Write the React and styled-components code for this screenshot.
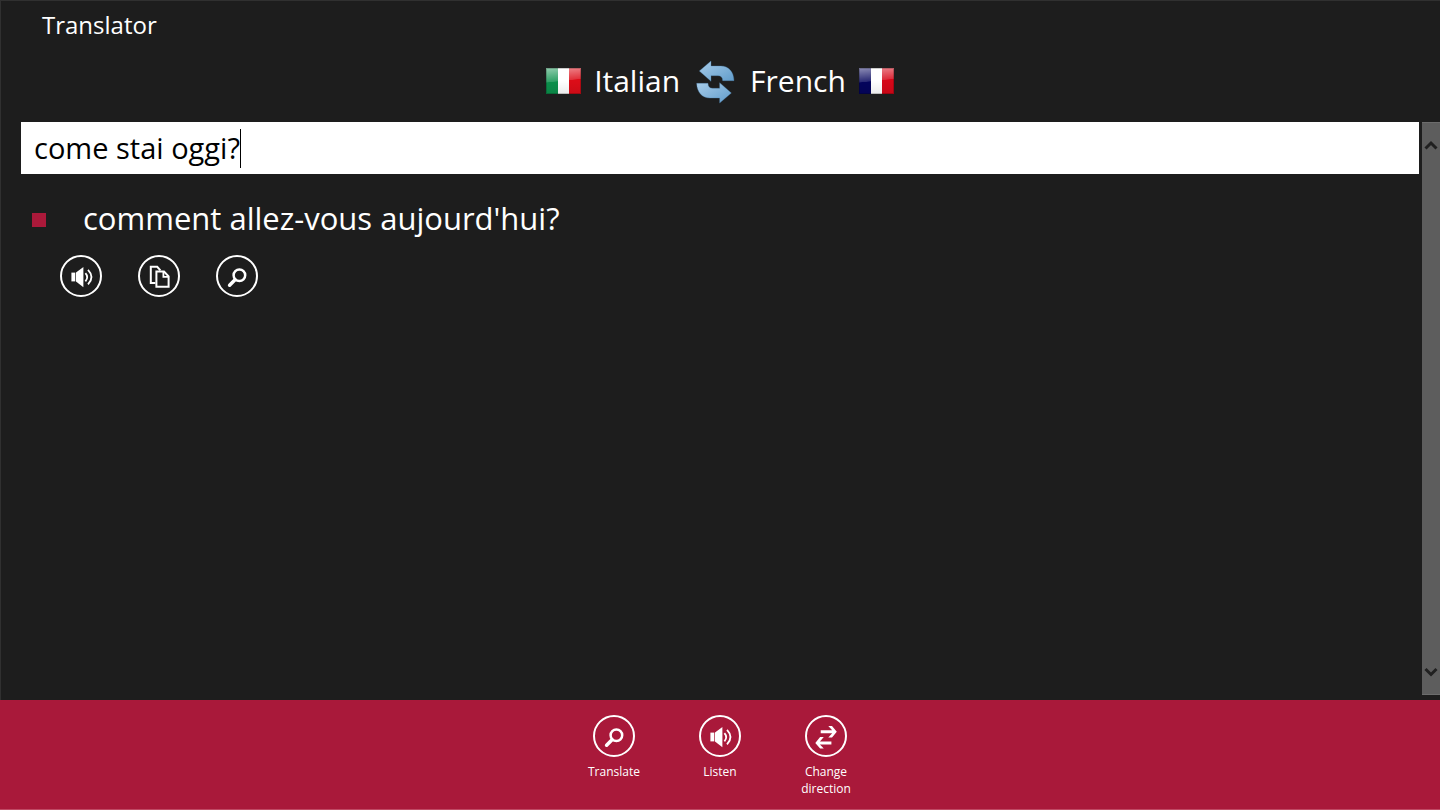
import React, { useState } from "react";
import styled, { createGlobalStyle } from "styled-components";

const GlobalStyle = createGlobalStyle`
  *, *::before, *::after { box-sizing: border-box; }
  body {
    margin: 0;
    background: #1d1d1d;
    color: #fff;
    font-family: "Open Sans", "Noto Sans", sans-serif;
  }
  button { font: inherit; color: inherit; background: none; border: 0; padding: 0; cursor: pointer; }
`;

const Page = styled.div`
  min-height: 100vh;
  display: flex;
  flex-direction: column;
  box-shadow: inset 1px 1px #303030;
`;

const Title = styled.h1`
  margin: 0;
  padding: 7px 42px 0;
  font-size: 24px;
  line-height: 36px;
  font-weight: 400;
`;

const Languages = styled.div`
  display: flex;
  justify-content: center;
  align-items: center;
  height: 52px;
  margin: 12px 0 15px;
`;

const Language = styled.button`
  display: flex;
  align-items: center;
  gap: 13px;
  font-size: 30px;
  line-height: 44px;
`;

const SwapButton = styled.button`
  width: 50px;
  height: 52px;
  margin: 0 10px;
  svg { display: block; }
`;

const Flag = styled.span`
  width: 35px;
  height: 26px;
  box-shadow: inset 0 0 0 1px rgba(0, 0, 0, 0.2);
  background:
    linear-gradient(174deg, rgba(255, 255, 255, 0.55), rgba(255, 255, 255, 0.15) 48%, transparent 50%),
    linear-gradient(transparent 50%, rgba(0, 0, 0, 0.08)),
    linear-gradient(90deg, ${(p) => p.$first} 33%, #fff 33% 67%, ${(p) => p.$last} 67%);
`;

const Body = styled.main`
  flex: 1;
  display: flex;
  gap: 3px;
  margin-bottom: 5px;
`;

const Content = styled.div`
  flex: 1;
  padding-left: 21px;
`;

const Field = styled.label`
  display: flex;
  align-items: center;
  height: 52px;
  padding-left: 13px;
  background: #fff;
  cursor: text;
`;

const FieldInput = styled.input`
  field-sizing: content;
  max-width: 100%;
  padding: 0;
  border: 0;
  outline: 0;
  background: none;
  color: #000;
  caret-color: transparent;
  font: inherit;
  font-size: 29px;
  line-height: 40px;
`;

const Caret = styled.span`
  width: 1px;
  height: 39px;
  background: #000;
`;

const Results = styled.ul`
  list-style: none;
  margin: 0;
  padding: 22px 0 0 11px;
`;

const Translation = styled.p`
  display: flex;
  align-items: center;
  gap: 37px;
  margin: 0;
  font-size: 31px;
  line-height: 44px;
  &::before {
    content: "";
    width: 14px;
    height: 14px;
    margin-top: 4px;
    background: #ab193a;
  }
`;

const Actions = styled.div`
  display: flex;
  gap: 36px;
  padding: 15px 0 0 28px;
`;

const RoundButton = styled.button`
  width: 42px;
  height: 42px;
  svg { display: block; }
`;

const Scrollbar = styled.div`
  width: 18px;
  display: flex;
  flex-direction: column;
  justify-content: space-between;
  background: #5d5d5d;
  border-top: 1px solid #6c6c6c;
  border-bottom: 1px solid #6c6c6c;
`;

const ScrollButton = styled.button`
  height: 44px;
  display: flex;
  align-items: center;
  justify-content: center;
`;

const AppBar = styled.footer`
  display: flex;
  justify-content: center;
  min-height: 110px;
  padding: 15px 0 10px;
  background: #a9193a;
  border-bottom: 1px solid #c04a64;
`;

const Command = styled.button`
  width: 106px;
  padding: 0 20px;
  display: flex;
  flex-direction: column;
  align-items: center;
  gap: 6px;
  font-size: 12px;
  line-height: 17px;
`;

function Circle({ children }) {
  return (
    <svg width="42" height="42" viewBox="0 0 42 42" fill="none" stroke="#fff" aria-hidden="true">
      <circle cx="21" cy="21" r="20" strokeWidth="2" />
      {children}
    </svg>
  );
}

const SpeakerIcon = () => (
  <Circle>
    <path d="M11.4 17.6h3.9v8.8h-3.9z" fill="#fff" stroke="none" />
    <path d="M16 17.6l7.4-5.6v20.2L16 26.6z" fill="#fff" stroke="none" />
    <path d="M25.4 18.2q3.6 4 0 8.2" strokeWidth="1.8" />
    <path d="M28 14.8q7 7.2 0 14.6" strokeWidth="1.8" />
  </Circle>
);

const CopyIcon = () => (
  <Circle>
    <path d="M17.4 28h-4.6V11.8h6.4l3.2 3.6" strokeWidth="2" />
    <path d="M18.4 16.6h7.6l4.6 4.800v10.400H18.4z" strokeWidth="2" />
    <path d="M25.400 16.4v5.500H31" strokeWidth="1.8" />
  </Circle>
);

const SearchIcon = () => (
  <Circle>
    <circle cx="23.4" cy="20.2" r="5.800" strokeWidth="2.500" />
    <path d="M19 24.800l-5.400 5.400" strokeWidth="3.500" strokeLinecap="round" />
  </Circle>
);

const DirectionIcon = () => (
  <Circle>
    <path d="M15.700 15.300H27.200L23.300 10.900H27L31.800 16.700L27 22.400H23.300L27.200 18.300H15.700Z" fill="#fff" stroke="none" />
    <path d="M26.400 26.500H14.900L18.800 22.100H15.100L10.300 27.900L15.100 33.600H18.800L14.900 29.500H26.400Z" fill="#fff" stroke="none" />
  </Circle>
);

const SwapIcon = () => (
  <svg width="50" height="52" viewBox="0 0 150 156" aria-hidden="true">
    <defs>
      <linearGradient id="swap-blue" x1="0" y1="0" x2="1" y2="1">
        <stop offset="0" stopColor="#a9cdea" />
        <stop offset="1" stopColor="#609ccb" />
      </linearGradient>
    </defs>
    <g fill="url(#swap-blue)" stroke="#4c83b0" strokeWidth="1">
      <path d="M28 48L63 18V33H92C116 33 131 50 132 77H98C98 67 93 62 84 62H63V79Z" />
      <path d="M124 114L89 144V129H60C36 129 21 112 20 85H54C54 95 59 100 68 100H89V83Z" />
    </g>
  </svg>
);

const Chevron = ({ d }) => (
  <svg width="14" height="12" viewBox="0 0 14 12" fill="none" stroke="#202020" strokeWidth="3" aria-hidden="true">
    <path d={d} />
  </svg>
);

export default function App() {
  const [text, setText] = useState("come stai oggi?");
  return (
    <>
      <GlobalStyle />
      <Page>
        <Title>Translator</Title>
        <Languages>
          <Language><Flag $first="#0b8f4b" $last="#dc0d18" />Italian</Language>
          <SwapButton aria-label="Swap languages"><SwapIcon /></SwapButton>
          <Language>French<Flag $first="#04045c" $last="#d60718" /></Language>
        </Languages>
        <Body>
          <Content>
            <Field>
              <FieldInput aria-label="Text to translate" value={text} onChange={(e) => setText(e.target.value)} />
              <Caret />
            </Field>
            <Results>
              <li>
                <Translation>comment allez-vous aujourd'hui?</Translation>
                <Actions>
                  <RoundButton aria-label="Listen to translation"><SpeakerIcon /></RoundButton>
                  <RoundButton aria-label="Copy"><CopyIcon /></RoundButton>
                  <RoundButton aria-label="Search"><SearchIcon /></RoundButton>
                </Actions>
              </li>
            </Results>
          </Content>
          <Scrollbar>
            <ScrollButton aria-label="Scroll up"><Chevron d="M1.5 9.5L7 4l5.5 5.5" /></ScrollButton>
            <ScrollButton aria-label="Scroll down"><Chevron d="M1.5 3L7 8.5 12.5 3" /></ScrollButton>
          </Scrollbar>
        </Body>
        <AppBar>
          <Command><SearchIcon />Translate</Command>
          <Command><SpeakerIcon />Listen</Command>
          <Command><DirectionIcon />Change direction</Command>
        </AppBar>
      </Page>
    </>
  );
}
